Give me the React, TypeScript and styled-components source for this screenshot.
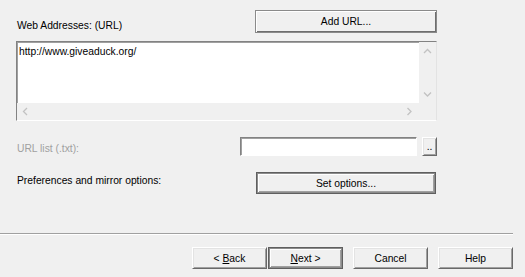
import React from "react";
import styled, { createGlobalStyle, css } from "styled-components";

const Global = createGlobalStyle`
  html, body { margin: 0; padding: 0; background: #f0f0f0; }
  body { font-family: "Liberation Sans", Arial, sans-serif; font-size: 10.3px; color: #000; }
`;

const Page = styled.div`
  width: 525px;
  height: 277px;
  background: #f0f0f0;
  display: flex;
  flex-direction: column;
  overflow: hidden;
`;

const Form = styled.div`
  display: flex;
  flex-direction: column;
  padding: 10px 88px 0 16px;
`;

const Row = styled.div<{ $h: number; $mt?: number; $align?: string }>`
  display: flex;
  justify-content: space-between;
  align-items: ${(p) => p.$align || "center"};
  height: ${(p) => p.$h}px;
  margin-top: ${(p) => p.$mt || 0}px;
`;

const Label = styled.span<{ $disabled?: boolean; $pb?: number; $pt?: number }>`
  padding-left: 1px;
  padding-bottom: ${(p) => p.$pb || 0}px;
  padding-top: ${(p) => p.$pt || 0}px;
  color: ${(p) => (p.$disabled ? "#a0a0a0" : "#000")};
  white-space: nowrap;
`;

const btnBase = css`
  box-sizing: border-box;
  font: inherit;
  color: #000;
  background: #f0f0f0;
  padding: 0;
  display: flex;
  align-items: center;
  justify-content: center;
  white-space: pre;
  cursor: default;
`;

const Button = styled.button<{ $w: number; $h: number; $kind?: "raised" | "default" | "flat"; $mr?: number }>`
  ${btnBase};
  width: ${(p) => p.$w}px;
  height: ${(p) => p.$h}px;
  margin-right: ${(p) => p.$mr || 0}px;
  ${(p) =>
    p.$kind === "default"
      ? css`
          border: 1px solid #5f5f5f;
          box-shadow: inset 1px 1px #8c8c8c, inset -1px -1px #8c8c8c, inset 2px 2px #fff, inset -2px -2px #a0a0a0;
        `
      : p.$kind === "flat"
      ? css`
          border: 1px solid #8a8a8a;
          box-shadow: inset 1px 1px #fff, inset -1px -1px #6e6e6e;
        `
      : css`
          border: 1px solid;
          border-color: #fff #696969 #696969 #fff;
          box-shadow: inset 1px 1px #e3e3e3, inset -1px -1px #a0a0a0;
        `}
`;

const U = styled.span`
  text-decoration: underline;
  text-underline-offset: 1px;
`;

const ListBox = styled.div`
  box-sizing: border-box;
  margin-top: 8px;
  height: 80px;
  border: 1px solid;
  border-color: #828282 #e3e3e3 #ffffff #828282;
  box-shadow: inset 1px 1px #a0a0a0;
  background: #fff;
  display: grid;
  grid-template-columns: 1fr 17px;
  grid-template-rows: 1fr 17px;
`;

const ListText = styled.div`
  padding: 3px 0 0 2px;
  line-height: 13px;
`;

const VScroll = styled.div`
  background: #f0f0f0;
  display: flex;
  flex-direction: column;
  justify-content: space-between;
  align-items: center;
  padding: 6px 0 5px;
`;

const HScroll = styled.div`
  background: #f0f0f0;
  display: flex;
  justify-content: space-between;
  align-items: center;
  padding: 0 6px 0 5px;
`;

const Corner = styled.div`
  background: #f0f0f0;
`;

const Arrow = styled.svg`
  display: block;
`;

const FieldGroup = styled.div`
  display: flex;
  gap: 5px;
  align-items: center;
`;

const TextInput = styled.div`
  box-sizing: border-box;
  width: 177px;
  height: 19px;
  background: #fff;
  border: 1px solid;
  border-color: #828282 #ffffff #ffffff #828282;
  box-shadow: inset 1px 1px #a0a0a0;
`;

const Separator = styled.div`
  margin-top: 39px;
  width: 513px;
  height: 1px;
  background: #a0a0a0;
  border-bottom: 1px solid #ffffff;
`;

const Footer = styled.div`
  display: flex;
  justify-content: flex-end;
  padding: 12px 12px 0 0;
  gap: 10px;
`;

const Pair = styled.div`
  display: flex;
  gap: 1px;
`;

const ArrowIcon = ({ dir }: { dir: "up" | "down" | "left" | "right" }) => {
  const paths: Record<string, string> = {
    up: "M1 5 L4.5 1.5 L8 5",
    down: "M1 1.5 L4.5 5 L8 1.5",
    left: "M5 1 L1.5 4.5 L5 8",
    right: "M1.5 1 L5 4.5 L1.5 8",
  };
  const horiz = dir === "up" || dir === "down";
  return (
    <Arrow width={horiz ? 9 : 7} height={horiz ? 7 : 9} viewBox={horiz ? "0 0 9 7" : "0 0 7 9"}>
      <path d={paths[dir]} fill="none" stroke="#c2c2c2" strokeWidth="1.3" />
    </Arrow>
  );
};

export default function App() {
  return (
    <Page>
      <Global />
      <Form>
        <Row $h={23} $align="flex-end">
          <Label $pb={2}>Web Addresses: (URL)</Label>
          <Button $w={182} $h={23} $kind="flat">Add URL...</Button>
        </Row>
        <ListBox>
          <ListText>http://www.giveaduck.org/</ListText>
          <VScroll>
            <ArrowIcon dir="up" />
            <ArrowIcon dir="down" />
          </VScroll>
          <HScroll>
            <ArrowIcon dir="left" />
            <ArrowIcon dir="right" />
          </HScroll>
          <Corner />
        </ListBox>
        <Row $h={19} $mt={16}>
          <Label $disabled $pt={4}>URL list (.txt):</Label>
          <FieldGroup>
            <TextInput />
            <Button $w={15} $h={19}>..</Button>
          </FieldGroup>
        </Row>
        <Row $h={22} $mt={16}>
          <Label $pb={5}>Preferences and mirror options:</Label>
          <Button $w={180} $h={22} $kind="default" $mr={1}>Set options...</Button>
        </Row>
      </Form>
      <Separator />
      <Footer>
        <Pair>
          <Button $w={75} $h={22}>{"< "}<U>B</U>ack</Button>
          <Button $w={75} $h={22} $kind="default"><U>N</U>{"ext >"}</Button>
        </Pair>
        <Button $w={75} $h={22}>Cancel</Button>
        <Button $w={75} $h={22}>Help</Button>
      </Footer>
    </Page>
  );
}
